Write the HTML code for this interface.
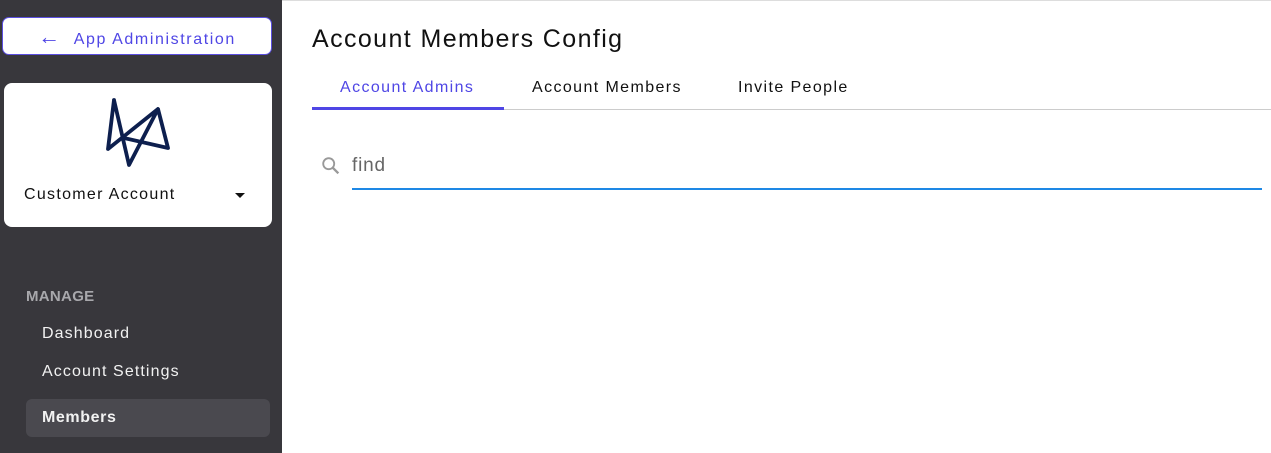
<!DOCTYPE html>
<html><head><style>
body{margin:0;width:1271px;height:453px;font-family:"Liberation Sans",sans-serif;background:#fff;position:relative;overflow:hidden}
.side{position:absolute;left:0;top:0;width:282px;height:453px;background:#38373c}
.btn{position:absolute;left:2px;top:17px;width:270px;height:38px;box-sizing:border-box;border:1px solid #5b4fe0;border-radius:7px;background:#fff;color:#4f46e5;font-size:16px;line-height:38px;text-align:center;letter-spacing:1.6px}
.card{position:absolute;left:4px;top:83px;width:268px;height:144px;background:#fff;border-radius:8px}
.acct{position:absolute;left:20px;top:103px;font-size:16px;color:#111;letter-spacing:1.3px}
.caret{position:absolute;left:231px;top:110px;width:0;height:0;border-left:5px solid transparent;border-right:5px solid transparent;border-top:5px solid #111}
.mg{position:absolute;left:26px;top:288px;color:#a8a8ac;font-size:15px;font-weight:bold;letter-spacing:0.3px}
.it{position:absolute;left:42px;color:#f2f2f2;font-size:16px;letter-spacing:1.1px}
.sel{position:absolute;left:26px;top:399px;width:244px;height:38px;background:#4a494f;border-radius:6px}
.top{position:absolute;left:282px;top:0;right:0;height:1px;border-top:1px solid #ddd}
h1{position:absolute;left:312px;top:25px;margin:0;font-weight:normal;font-size:25px;color:#111;letter-spacing:1.4px}
.tab{position:absolute;top:79px;font-size:16px;color:#111;letter-spacing:1.4px}
.line{position:absolute;left:312px;top:109px;width:959px;height:1px;background:#ccc}
.act{position:absolute;left:312px;top:107px;width:192px;height:3px;background:#4f46e5}
.find{position:absolute;left:352px;top:155px;font-size:19px;color:#666;letter-spacing:0.8px}
.ul{position:absolute;left:352px;top:188px;width:910px;height:2px;background:#1e88e5}
</style></head><body>
<div class="side">
<div class="btn"><span style="font-size:22px;margin-right:12px">&#8592;</span>App Administration</div>
<div class="card">
<svg style="position:absolute;left:0;top:0" width="268" height="144" viewBox="4 83 268 144"><g fill="none" stroke="#0d1f4e" stroke-width="3.8" stroke-linejoin="round" stroke-linecap="round"><path d="M114 100L108 149L158 109L168 148L124 138M114 100L129 165L158 109"/></g></svg>
<div class="acct">Customer Account</div><div class="caret"></div>
</div>
<div class="mg">MANAGE</div>
<div class="it" style="top:325px">Dashboard</div>
<div class="it" style="top:363px">Account Settings</div>
<div class="sel"></div>
<div class="it" style="top:409px;font-weight:bold;letter-spacing:0.6px">Members</div>
</div>
<div class="top"></div>
<h1>Account Members Config</h1>
<div class="tab" style="left:340px;color:#4f46e5">Account Admins</div>
<div class="tab" style="left:532px">Account Members</div>
<div class="tab" style="left:738px">Invite People</div>
<div class="line"></div><div class="act"></div>
<svg style="position:absolute;left:320px;top:155px" width="22" height="22" viewBox="0 0 24 24"><circle cx="9.5" cy="9.5" r="6" fill="none" stroke="#999" stroke-width="2"/><path d="M14 14l6 6" stroke="#999" stroke-width="2.5"/></svg>
<div class="find">find</div>
<div class="ul"></div>
</body></html>
